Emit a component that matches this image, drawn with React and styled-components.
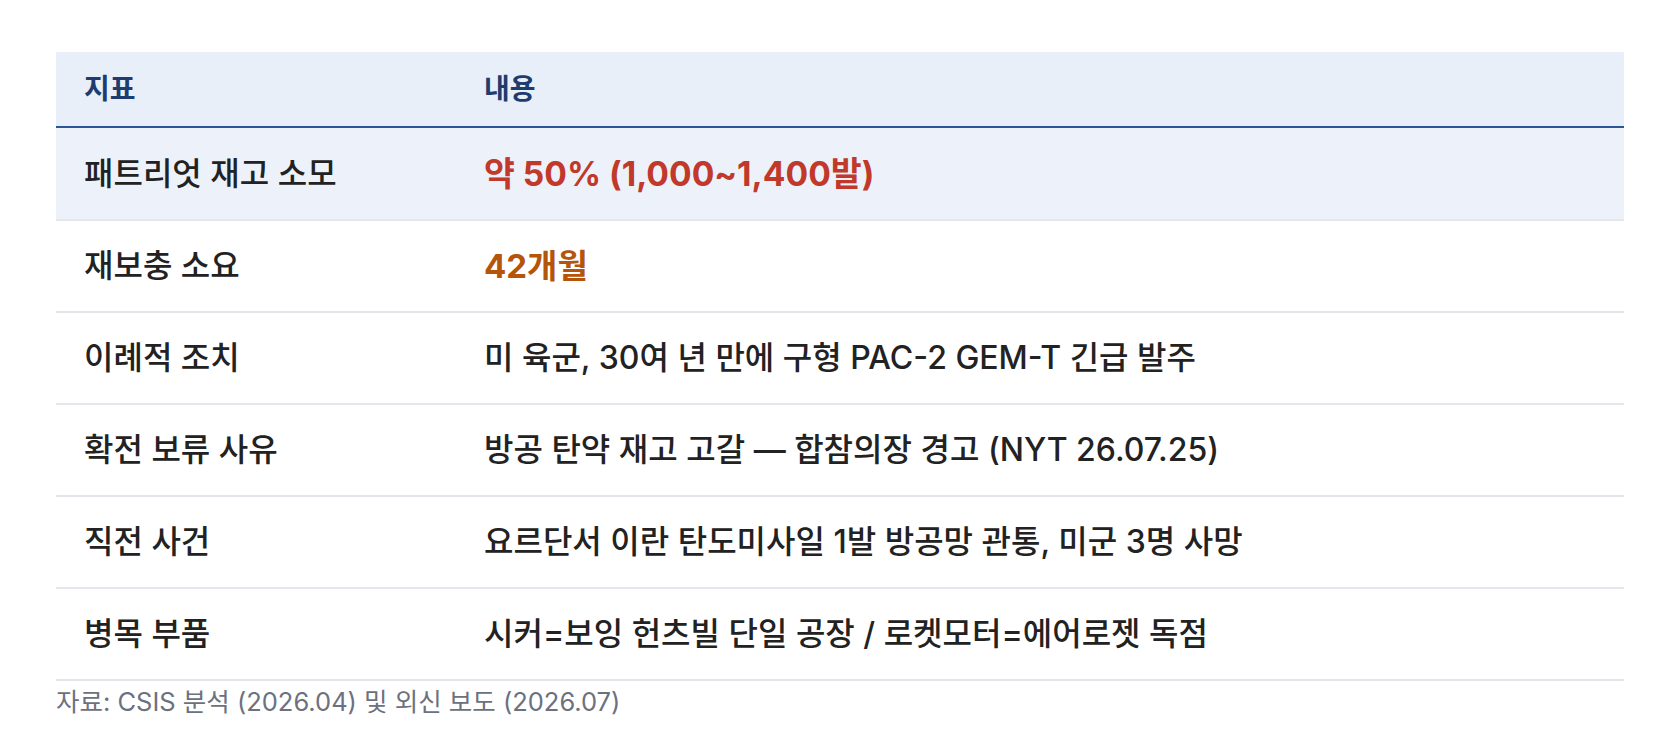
import React from 'react';
import styled, { createGlobalStyle } from 'styled-components';

const GlobalStyle = createGlobalStyle`
  html, body {
    margin: 0;
    padding: 0;
    background: #ffffff;
  }
  body {
    font-family: Inter, 'Noto Sans CJK KR', sans-serif;
    color: #222222;
  }
`;

const rows = [
  { label: '패트리엇 재고 소모', value: '약 50% (1,000~1,400발)', tone: 'red', highlight: true },
  { label: '재보충 소요', value: '42개월', tone: 'orange' },
  { label: '이례적 조치', value: '미 육군, 30여 년 만에 구형 PAC-2 GEM-T 긴급 발주' },
  { label: '확전 보류 사유', value: '방공 탄약 재고 고갈 — 합참의장 경고 (NYT 26.07.25)' },
  { label: '직전 사건', value: '요르단서 이란 탄도미사일 1발 방공망 관통, 미군 3명 사망' },
  { label: '병목 부품', value: '시커=보잉 헌츠빌 단일 공장 / 로켓모터=에어로젯 독점' },
];

const toneColors = {
  red: '#c0392b',
  orange: '#b5540b',
};

const Page = styled.div`
  padding: 52px 56px 0;
`;

const Table = styled.table`
  width: 100%;
  border-collapse: collapse;
`;

const HeadRow = styled.tr`
  background: #e8eff8;
  border-bottom: 2px solid #2c5597;
`;

const HeadCell = styled.th`
  text-align: left;
  padding: 18px 28px;
  line-height: 38px;
  font-size: 28px;
  font-weight: 700;
  color: #1e3c6e;
  width: ${(p) => p.$width || 'auto'};
`;

const Row = styled.tr`
  background: ${(p) => (p.$highlight ? '#edf2fa' : '#ffffff')};
  border-bottom: 2px solid #e5e6eb;
`;

const Cell = styled.td`
  padding: 23px 28px;
  height: ${(p) => (p.$tall ? '45px' : '44px')};
  line-height: 44px;
  font-size: ${(p) => (p.$tone === 'red' ? '33.6px' : p.$tone ? '33px' : '32px')};
  color: ${(p) => (p.$tone ? toneColors[p.$tone] : '#222222')};
  font-weight: ${(p) => (p.$tone ? 700 : 500)};
`;

const Source = styled.p`
  margin: 3px 0 0;
  font-size: 25.5px;
  line-height: 36px;
  color: #6b7180;
`;

const App = () => {
  return (
    <Page>
      <GlobalStyle />
      <Table>
        <thead>
          <HeadRow>
            <HeadCell $width="344px">지표</HeadCell>
            <HeadCell>내용</HeadCell>
          </HeadRow>
        </thead>
        <tbody>
          {rows.map((r) => (
            <Row key={r.label} $highlight={r.highlight}>
              <Cell $tall={r.highlight}>{r.label}</Cell>
              <Cell $tall={r.highlight} $tone={r.tone}>
                {r.value}
              </Cell>
            </Row>
          ))}
        </tbody>
      </Table>
      <Source>자료: CSIS 분석 (2026.04) 및 외신 보도 (2026.07)</Source>
    </Page>
  );
};

export default App;
